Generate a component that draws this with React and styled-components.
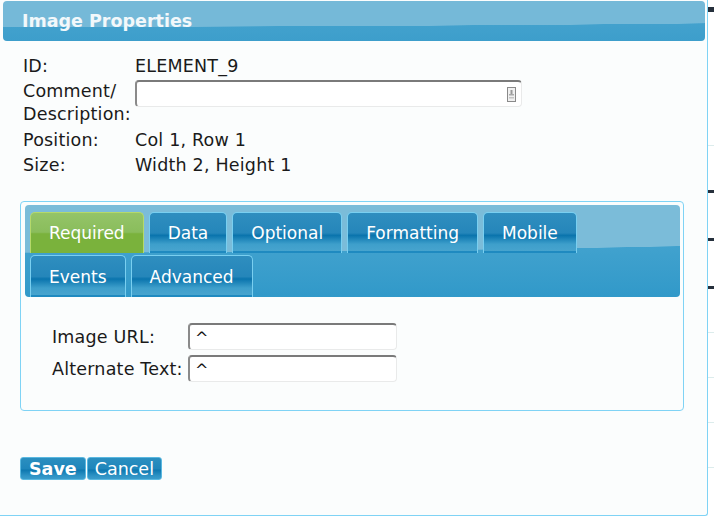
import styled, { createGlobalStyle } from 'styled-components';

const GlobalStyle = createGlobalStyle`
  body {
    margin: 0;
    background: #ffffff;
    font-family: "DejaVu Sans", Verdana, sans-serif;
  }
`;

const Page = styled.div`
  display: flex;
  width: 714px;
  height: 517px;
  overflow: hidden;
  background: #ffffff;
`;

const Dialog = styled.div`
  width: 702px;
  height: 514px;
  flex-shrink: 0;
  padding: 1px 2px 0 3px;
  background: #fbfdfd;
  border-right: 1px solid #7fd3f5;
  border-bottom: 1px solid #7fd3f5;
  border-bottom-right-radius: 3px;
  display: flex;
  flex-direction: column;
`;

const TitleBar = styled.div`
  height: 40px;
  padding-left: 19px;
  display: flex;
  align-items: center;
  border-radius: 4px;
  color: #f2f8fb;
  font-size: 17.5px;
  font-weight: bold;
  background:
    radial-gradient(ellipse 200% 65% at 0% 0%, #75b9d8 99%, transparent 100%),
    linear-gradient(#4aa6d0, #3d9ecb);
`;

const InfoGrid = styled.div`
  display: grid;
  grid-template-columns: 112px auto;
  row-gap: 3px;
  margin: 14px 0 0 20px;
  font-size: 17.5px;
  letter-spacing: 0.2px;
  line-height: 22px;
  color: #1a1a1a;
`;

const Label = styled.div`
  line-height: ${(p) => (p.$tall ? '23px' : '22px')};
`;

const Value = styled.div``;

const TextBox = styled.div`
  box-sizing: border-box;
  width: ${(p) => p.$width}px;
  height: 27px;
  padding: 0 5px;
  background: #ffffff;
  border: 1px solid #e9eaea;
  border-top: 2px solid #7a7a7a;
  border-left: 2px solid #8a8a8a;
  border-radius: 4px;
  display: flex;
  align-items: center;
  justify-content: space-between;
  font-size: 16px;
  color: #111;
`;

const Panel = styled.div`
  margin: 25px 0 0 17px;
  width: 655px;
  height: 205px;
  padding: 3px 3px 0 4px;
  border: 1px solid #7fd3f5;
  border-radius: 4px;
`;

const TabHeader = styled.div`
  height: 85px;
  padding: 7px 0 0 5px;
  border-radius: 4px;
  display: flex;
  flex-direction: column;
  gap: 2px;
  background:
    radial-gradient(ellipse 200% 52% at 0% 0%, #7bbcd9 99%, transparent 100%),
    linear-gradient(#4ea9d2, #3199c9);
`;

const TabRow = styled.div`
  display: flex;
  gap: 5px;
`;

const Tab = styled.div`
  box-sizing: border-box;
  height: ${(p) => (p.$row2 ? 42 : 41)}px;
  padding: 0 18px;
  display: flex;
  align-items: center;
  color: #ffffff;
  font-size: 17px;
  border: 1px solid ${(p) => (p.$active ? '#b5d96a' : '#79cff0')};
  border-bottom: none;
  border-radius: 5px 5px 0 0;
  background: ${(p) =>
    p.$active
      ? 'linear-gradient(#94c468 0%, #8abd5c 48%, #7ab23c 52%, #7ab23c 100%)'
      : 'linear-gradient(#2f8ebf 0%, #2586ba 50%, #0a74ad 56%, #3e9fcb 78%, #4aa5cf 100%)'};
  box-shadow: ${(p) => (p.$active ? 'none' : 'inset 0 -2px 0 #1f8ac0')};
`;

const FieldGrid = styled.div`
  display: grid;
  grid-template-columns: 136px auto;
  row-gap: 5px;
  margin: 26px 0 0 27px;
  font-size: 17.5px;
  letter-spacing: 0.2px;
  color: #1a1a1a;
`;

const FieldLabel = styled.div`
  display: flex;
  align-items: center;
`;

const Buttons = styled.div`
  display: flex;
  gap: 1px;
  margin: 46px 0 0 17px;
`;

const Button = styled.button`
  height: 23px;
  padding: 0 ${(p) => (p.$primary ? 8 : 7)}px;
  font-family: "DejaVu Sans", Verdana, sans-serif;
  font-size: 17.5px;
  font-weight: ${(p) => (p.$primary ? 'bold' : 'normal')};
  color: #ffffff;
  border: 1px solid #5ab8e0;
  border-radius: 3px;
  line-height: 20px;
  background: linear-gradient(#2b8fc0 0%, #1f86bb 50%, #0e78b0 58%, #2e93c5 85%, #3a9ccb 100%);
`;

const Side = styled.div`
  flex: 1;
  display: flex;
  flex-direction: column;
`;

const Mark = styled.div`
  height: ${(p) => p.$h}px;
  margin-top: ${(p) => p.$gap}px;
  background: ${(p) => p.$c};
`;

const ResizeIcon = () => (
  <svg width="9" height="15" viewBox="0 0 9 15">
    <rect x="0.5" y="0.5" width="8" height="14" fill="#f0f0f0" stroke="#8a8a8a" />
    <rect x="3.5" y="3" width="2" height="4" fill="#999" />
    <rect x="2" y="7" width="5" height="1.5" fill="#aaa" />
    <rect x="2" y="10" width="5" height="1.5" fill="#c4c4c4" />
  </svg>
);

const sideMarks = [
  { gap: 7, h: 5, c: '#26303c' },
  { gap: 133, h: 1, c: '#dcecec' },
  { gap: 44, h: 3, c: '#26303c' },
  { gap: 45, h: 3, c: '#26303c' },
  { gap: 45, h: 3, c: '#26303c' },
  { gap: 43, h: 1, c: '#dcecec' },
  { gap: 44, h: 1, c: '#dcecec' },
  { gap: 44, h: 1, c: '#dcecec' },
  { gap: 44, h: 1, c: '#dcecec' },
];

const row1 = ['Required', 'Data', 'Optional', 'Formatting', 'Mobile'];
const row2 = ['Events', 'Advanced'];

const App = () => {
  return (
    <>
      <GlobalStyle />
      <Page>
        <Dialog>
          <TitleBar>Image Properties</TitleBar>
          <InfoGrid>
            <Label>ID:</Label>
            <Value>ELEMENT_9</Value>
            <Label $tall>
              Comment/
              <br />
              Description:
            </Label>
            <Value>
              <TextBox $width={387}>
                <span></span>
                <ResizeIcon />
              </TextBox>
            </Value>
            <Label>Position:</Label>
            <Value>Col 1, Row 1</Value>
            <Label>Size:</Label>
            <Value>Width 2, Height 1</Value>
          </InfoGrid>
          <Panel>
            <TabHeader>
              <TabRow>
                {row1.map((t, i) => (
                  <Tab key={t} $active={i === 0}>
                    {t}
                  </Tab>
                ))}
              </TabRow>
              <TabRow>
                {row2.map((t) => (
                  <Tab key={t} $row2>
                    {t}
                  </Tab>
                ))}
              </TabRow>
            </TabHeader>
            <FieldGrid>
              <FieldLabel>Image URL:</FieldLabel>
              <TextBox $width={209}>^</TextBox>
              <FieldLabel>Alternate Text:</FieldLabel>
              <TextBox $width={209}>^</TextBox>
            </FieldGrid>
          </Panel>
          <Buttons>
            <Button $primary>Save</Button>
            <Button>Cancel</Button>
          </Buttons>
        </Dialog>
        <Side>
          {sideMarks.map((m, i) => (
            <Mark key={i} $gap={m.gap} $h={m.h} $c={m.c} />
          ))}
        </Side>
      </Page>
    </>
  );
};

export default App;
